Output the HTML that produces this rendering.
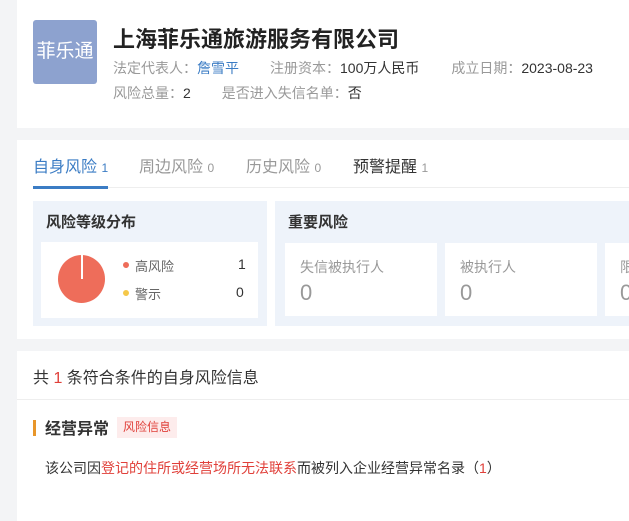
<!DOCTYPE html>
<html><head><meta charset="utf-8"><style>
*{margin:0;padding:0;box-sizing:border-box}
body{width:629px;height:519px;overflow:hidden;background:#f3f4f6;font-family:"Liberation Sans","Noto Sans CJK SC",sans-serif;position:relative;color:#333}
.a{position:absolute;white-space:nowrap}
.card{position:absolute;background:#fff;left:17px;width:640px}
.g{color:#999}
</style></head><body>
<div class="card" style="top:0;height:128px"></div>
<div class="a" style="left:33px;top:20px;width:64px;height:64px;background:#8da2cf;border-radius:3px;color:#fff;font-size:19px;line-height:64px;text-align:center">菲乐通</div>
<div class="a" style="left:113px;top:22px;font-size:22px;font-weight:bold;color:#222">上海菲乐通旅游服务有限公司</div>
<div class="a" style="left:113px;top:58px;font-size:14px"><span class="g">法定代表人：</span><span style="color:#3b7cc4">詹雪平</span><span class="g" style="margin-left:31px">注册资本：</span>100万人民币<span class="g" style="margin-left:32px">成立日期：</span>2023-08-23</div>
<div class="a" style="left:113px;top:83px;font-size:14px"><span class="g">风险总量：</span>2<span class="g" style="margin-left:31px">是否进入失信名单：</span>否</div>

<div class="card" style="top:140px;height:199px"></div>
<div class="a" style="left:33px;top:153px;font-size:16px;color:#3b7cc4">自身风险 <span style="font-size:12px">1</span></div>
<div class="a" style="left:139px;top:153px;font-size:16px;color:#999">周边风险 <span style="font-size:12px">0</span></div>
<div class="a" style="left:246px;top:153px;font-size:16px;color:#999">历史风险 <span style="font-size:12px">0</span></div>
<div class="a" style="left:353px;top:153px;font-size:16px;color:#333">预警提醒 <span style="font-size:12px;color:#999">1</span></div>
<div class="a" style="left:33px;top:187px;width:600px;height:1px;background:#eee"></div>
<div class="a" style="left:33px;top:186px;width:75px;height:3px;background:#3b7cc4"></div>

<div class="a" style="left:33px;top:201px;width:234px;height:125px;background:#eef3fa"></div>
<div class="a" style="left:46px;top:211px;font-size:15px;font-weight:bold">风险等级分布</div>
<div class="a" style="left:41px;top:242px;width:217px;height:76px;background:#fff"></div>
<div class="a" style="left:58px;top:255px;width:47px;height:48px;border-radius:50%;background:#ee6d5a"></div>
<div class="a" style="left:81px;top:255px;width:1.5px;height:24px;background:#fff"></div>
<div class="a" style="left:123px;top:262px;width:6px;height:6px;border-radius:50%;background:#ee6d5a"></div>
<div class="a" style="left:135px;top:256px;font-size:13px;color:#666">高风险</div>
<div class="a" style="left:238px;top:256px;font-size:14px">1</div>
<div class="a" style="left:123px;top:290px;width:6px;height:6px;border-radius:50%;background:#f5c84a"></div>
<div class="a" style="left:135px;top:284px;font-size:13px;color:#666">警示</div>
<div class="a" style="left:236px;top:284px;font-size:14px">0</div>

<div class="a" style="left:275px;top:201px;width:360px;height:125px;background:#eef3fa"></div>
<div class="a" style="left:288px;top:211px;font-size:15px;font-weight:bold">重要风险</div>
<div class="a" style="left:285px;top:243px;width:152px;height:73px;background:#fff"></div>
<div class="a" style="left:445px;top:243px;width:152px;height:73px;background:#fff"></div>
<div class="a" style="left:605px;top:243px;width:40px;height:73px;background:#fff"></div>
<div class="a" style="left:300px;top:257px;font-size:14px;color:#999">失信被执行人</div>
<div class="a" style="left:460px;top:257px;font-size:14px;color:#999">被执行人</div>
<div class="a" style="left:620px;top:257px;font-size:14px;color:#999">限</div>
<div class="a" style="left:300px;top:280px;font-size:22px;color:#999">0</div>
<div class="a" style="left:460px;top:280px;font-size:22px;color:#999">0</div>
<div class="a" style="left:620px;top:280px;font-size:22px;color:#999">0</div>

<div class="card" style="top:351px;height:170px"></div>
<div class="a" style="left:33px;top:364px;font-size:16px">共 <span style="color:#e0403a">1</span> 条符合条件的自身风险信息</div>
<div class="a" style="left:17px;top:399px;width:620px;height:1px;background:#eee"></div>
<div class="a" style="left:33px;top:420px;width:3px;height:16px;background:#e8962a"></div>
<div class="a" style="left:45px;top:415px;font-size:16px;font-weight:bold">经营异常</div>
<div class="a" style="left:117px;top:417px;height:21px;padding:0 6px;background:#fdecec;color:#e0403a;font-size:12px;line-height:21px">风险信息</div>
<div class="a" style="left:45px;top:458px;font-size:14px">该公司因<span style="color:#e0403a">登记的住所或经营场所无法联系</span>而被列入企业经营异常名录（<span style="color:#e0403a">1</span>）</div>
</body></html>
